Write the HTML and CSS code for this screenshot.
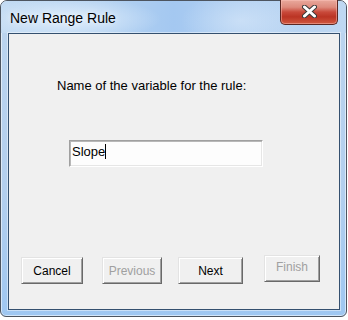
FILE: index.html
```
<!DOCTYPE html>
<html>
<head>
<meta charset="utf-8">
<link rel="stylesheet" href="styles.css">
</head>
<body>
<div class="window">
  <div class="titlebar">
    <div class="title">New Range Rule</div>
    <div class="close">
      <svg width="15" height="13" viewBox="0 0 15 13">
        <path d="M2.5 2 L12.5 11 M12.5 2 L2.5 11" stroke="#3a3a3a" stroke-width="5" stroke-linecap="round"/>
        <path d="M2.5 2 L12.5 11 M12.5 2 L2.5 11" stroke="#ffffff" stroke-width="3" stroke-linecap="round"/>
      </svg>
    </div>
  </div>
  <div class="client">
    <div class="label">Name of the variable for the rule:</div>
    <div class="field"><span class="value">Slope</span><span class="caret"></span></div>
    <div class="buttons">
      <div class="btn cancel">Cancel</div>
      <div class="btn prev disabled">Previous</div>
      <div class="btn next">Next</div>
      <div class="btn finish disabled">Finish</div>
    </div>
  </div>
</div>
</body>
</html>
```
FILE: styles.css
```
html, body {
  margin: 0;
  padding: 0;
  background: #ffffff;
}
body {
  width: 348px;
  height: 320px;
  overflow: hidden;
  font-family: "Liberation Sans", Arial, sans-serif;
}
.window {
  width: 347px;
  height: 317px;
  box-sizing: border-box;
  border: 1px solid #4d5560;
  border-radius: 7px 7px 6px 6px;
  background: linear-gradient(to bottom, #bcd5ef 0%, #b3cfee 60%, #9fc7f1 100%);
  box-shadow: inset 0 0 0 1px rgba(255,255,255,0.55);
  display: flex;
  flex-direction: column;
  padding: 0 6px 6px 7px;
}
.titlebar {
  height: 32px;
  margin: 0 -6px 0 -7px;
  display: flex;
  justify-content: space-between;
  align-items: flex-start;
  border-radius: 6px 6px 0 0;
  background:
    radial-gradient(ellipse 90px 22px at 70px 18px, rgba(235,245,255,0.75), rgba(235,245,255,0) 100%),
    radial-gradient(ellipse 60px 30px at 240px 20px, rgba(225,238,252,0.5), rgba(225,238,252,0) 100%),
    linear-gradient(to right, #c3dbf3 0%, #b4d2f1 30%, #a4c8f1 50%, #b2d0f1 70%, #bfd8f2 100%);
}
.title {
  font-size: 14px;
  line-height: 16px;
  padding: 9px 0 0 9px;
  color: #000;
  text-shadow: 0 0 6px rgba(255,255,255,0.9);
}
.close {
  width: 58px;
  height: 25px;
  box-sizing: border-box;
  margin: -1px 8px 0 0;
  border: 1px solid #5b2722;
  border-top: none;
  border-radius: 0 0 5px 5px;
  background: linear-gradient(to bottom, #e9a99d 0%, #dd8a7c 30%, #c94a3b 50%, #bb3424 70%, #d0583f 100%);
  box-shadow: inset 0 0 0 1px rgba(255,200,190,0.45);
  display: flex;
  justify-content: center;
  align-items: flex-start;
  padding-top: 5px;
}
.close svg {
  display: block;
}
.client {
  flex: 1;
  background: #f0f0f0;
  border: 1px solid #34506f;
  box-shadow: 0 0 0 1px rgba(255,255,255,0.45);
  display: flex;
  flex-direction: column;
  align-items: flex-start;
}
.label {
  font-size: 13px;
  line-height: 15px;
  color: #000;
  margin: 44px 0 0 48px;
}
.field {
  margin: 47px 0 0 60px;
  width: 194px;
  height: 27px;
  box-sizing: border-box;
  background: #fdfdfd;
  border-style: solid;
  border-width: 1px;
  border-color: #a0a0a0 #ffffff #ffffff #a0a0a0;
  box-shadow: inset 1px 1px 0 #b8b8b8, inset -1px -1px 0 #e6e6e6;
  padding: 3px 0 0 2px;
  display: flex;
  align-items: flex-start;
  font-size: 13px;
  line-height: 15px;
  color: #000;
}
.caret {
  width: 1px;
  height: 15px;
  background: #000;
}
.buttons {
  display: flex;
  align-items: flex-start;
  margin-top: 88px;
  padding-left: 12px;
}
.btn {
  height: 27px;
  box-sizing: border-box;
  display: flex;
  align-items: center;
  justify-content: center;
  font-size: 12px;
  line-height: 14px;
  color: #000;
  background: #f0f0f0;
  border-style: solid;
  border-width: 1px;
  border-color: #e3e3e3 #696969 #696969 #e3e3e3;
  box-shadow: inset 1px 1px 0 #ffffff, inset -1px -1px 0 #a0a0a0;
}
.cancel {
  width: 62px;
  margin-top: 2px;
}
.prev {
  width: 60px;
  margin-left: 19px;
  margin-top: 2px;
}
.next {
  width: 65px;
  margin-left: 16px;
  margin-top: 2px;
}
.finish {
  width: 56px;
  margin-left: 21px;
  padding-bottom: 3px;
}
.disabled {
  color: #a0a0a0;
}
```
